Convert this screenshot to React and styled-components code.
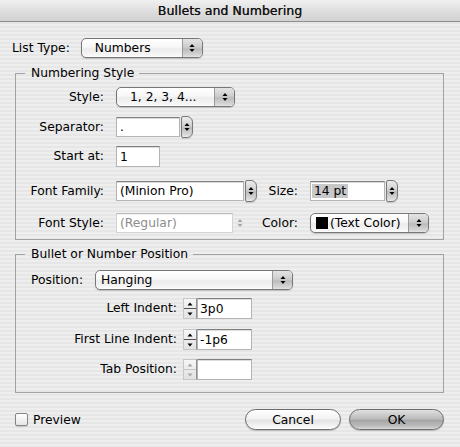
import React from "react";
import styled, { createGlobalStyle } from "styled-components";

const Global = createGlobalStyle`
  html, body { margin: 0; padding: 0; }
  body {
    font-family: "DejaVu Sans", "Liberation Sans", sans-serif;
    font-size: 12.3px;
    color: #000;
    background: #e8e8e8;
  }
`;

const Window = styled.div`
  width: 460px;
  height: 447px;
  box-sizing: border-box;
  background: repeating-linear-gradient(#eeeeee 0 2px, #e6e6e6 2px 4px);
  display: flex;
  flex-direction: column;
`;

const TitleBar = styled.div`
  height: 21px;
  border-bottom: 1px solid #8e8e8e;
  background: linear-gradient(#f0f0f0, #dcdcdc 60%, #d2d2d2);
  display: flex;
  align-items: center;
  justify-content: center;
  font-size: 12.4px;
  color: #111;
  letter-spacing: 0.1px;
  text-shadow: 0.3px 0 0 #333;
`;

const Body = styled.div`
  padding: 16px 16px 0 12px;
  display: flex;
  flex-direction: column;
`;

const Row = styled.div`
  display: flex;
  align-items: center;
  margin-top: ${(p) => p.$mt || 0}px;
  padding-left: ${(p) => p.$pl || 0}px;
`;

const Label = styled.span`
  flex: none;
  width: ${(p) => (p.$w ? `${p.$w}px` : "auto")};
  text-align: ${(p) => p.$align || "right"};
  margin-right: ${(p) => (p.$gap ?? 12)}px;
  white-space: nowrap;
  line-height: 15px;
`;

const Group = styled.fieldset`
  margin: ${(p) => p.$mt}px 0 0 3px;
  padding: ${(p) => p.$pt}px 0 ${(p) => p.$pb}px 0;
  border: 1px solid #a2a2a2;
  width: 429px;
  box-sizing: border-box;
  min-inline-size: 0;
`;

const Legend = styled.legend`
  margin-left: 9px;
  padding: 0 5px 0 6px;
  line-height: 15px;
  font-size: 12.3px;
`;

/* ---------- pop-up button ---------- */
const Popup = styled.div`
  flex: none;
  display: flex;
  width: ${(p) => p.$w}px;
  height: 20px;
  box-sizing: border-box;
  border: 1px solid #777;
  border-radius: 5px;
  overflow: hidden;
  background: linear-gradient(#ffffff, #f7f7f7 45%, #ececec 55%, #f6f6f6 90%, #ffffff);
  box-shadow: 0 1px 1px rgba(0, 0, 0, 0.18);
`;

const PopupText = styled.div`
  flex: 1;
  display: flex;
  align-items: center;
  padding-left: ${(p) => p.$pl ?? 13}px;
  white-space: nowrap;
  overflow: hidden;
`;

const PopupArrow = styled.div`
  flex: none;
  width: 19px;
  border-left: 1px solid #9a9a9a;
  background: linear-gradient(#e4e4e4, #cdcdcd 45%, #bcbcbc 55%, #d6d6d6 90%, #e6e6e6);
  display: flex;
  align-items: center;
  justify-content: center;
`;

const Swatch = styled.span`
  display: inline-block;
  width: 12px;
  height: 12px;
  background: #000;
  margin-right: 2px;
`;

/* ---------- combo box ---------- */
const Combo = styled.div`
  flex: none;
  display: flex;
  align-items: stretch;
  width: ${(p) => p.$w}px;
  height: 20px;
`;

const Field = styled.div`
  flex: ${(p) => (p.$w ? "none" : "1")};
  width: ${(p) => (p.$w ? `${p.$w}px` : "auto")};
  height: ${(p) => p.$h || 20}px;
  box-sizing: border-box;
  background: #fff;
  border: 1px solid ${(p) => (p.$disabled ? "#d4d4d4" : "#b4b4b4")};
  border-top-color: ${(p) => (p.$disabled ? "#bdbdbd" : "#808080")};
  box-shadow: inset 0 1px 0 ${(p) => (p.$disabled ? "#eee" : "#dcdcdc")};
  color: ${(p) => (p.$disabled ? "#8c8c8c" : "#000")};
  display: flex;
  align-items: center;
  padding-left: ${(p) => p.$pl ?? 3}px;
  white-space: nowrap;
  overflow: hidden;
`;

const Selected = styled.span`
  background: #c8c8c8;
  padding: 0 2px 0 2px;
  margin-left: -2px;
  line-height: 14px;
`;

const ComboButton = styled.div`
  flex: none;
  width: 12px;
  margin: -1px 0 -1px 1px;
  box-sizing: border-box;
  border: 1px solid ${(p) => (p.$disabled ? "transparent" : "#7a7a7a")};
  border-radius: 2px 6px 6px 2px;
  background: ${(p) =>
    p.$disabled
      ? "transparent"
      : "linear-gradient(#ececec, #d0d0d0 45%, #bdbdbd 55%, #dadada 90%, #eeeeee)"};
  box-shadow: ${(p) => (p.$disabled ? "none" : "0 1px 1px rgba(0,0,0,0.15)")};
  display: flex;
  align-items: center;
  justify-content: center;
`;

/* ---------- stepper field ---------- */
const Stepper = styled.div`
  flex: none;
  width: 14px;
  height: 21px;
  box-sizing: border-box;
  border: 1px solid #c6c6c6;
  border-right: 1px solid #8e8e8e;
  background: linear-gradient(#f6f6f6, #e2e2e2);
  display: flex;
  flex-direction: column;
`;

const StepHalf = styled.div`
  flex: 1;
  display: flex;
  align-items: center;
  justify-content: center;
  border-top: ${(p) => (p.$bottom ? `1px solid ${p.$disabled ? "#c4c4c4" : "#555"}` : "none")};
`;

/* ---------- buttons ---------- */
const Footer = styled.div`
  display: flex;
  align-items: center;
  margin-top: 16px;
  padding-left: 3px;
`;

const Check = styled.span`
  width: 13px;
  height: 13px;
  box-sizing: border-box;
  border: 1px solid #858585;
  border-radius: 2px;
  background: linear-gradient(#ffffff, #f0f0f0 60%, #e4e4e4);
  box-shadow: 0 1px 1px rgba(0, 0, 0, 0.15);
  margin-right: 5px;
`;

const Spacer = styled.div`
  flex: 1;
`;

const PushButton = styled.button`
  width: ${(p) => p.$w}px;
  height: 21px;
  margin-left: ${(p) => p.$ml || 0}px;
  padding: 0;
  border: 1px solid #6c6c6c;
  border-radius: 11px;
  font: inherit;
  font-size: 12.3px;
  color: #000;
  background: ${(p) =>
    p.$default
      ? "linear-gradient(#e0e0e0, #bdbdbd 45%, #a6a6a6 55%, #bcbcbc 85%, #dadada)"
      : "linear-gradient(#ffffff, #f3f3f3 45%, #e4e4e4 55%, #f4f4f4 85%, #ffffff)"};
  box-shadow: 0 1px 1px rgba(0, 0, 0, 0.2);
`;

const Arrows = ({ color = "#000" }) => (
  <svg width="6" height="10" viewBox="0 0 6 10">
    <path d="M0.5 4 L3 1 L5.5 4 Z" fill={color} />
    <path d="M0.5 6 L3 9 L5.5 6 Z" fill={color} />
  </svg>
);

const Up = ({ color = "#000" }) => (
  <svg width="6" height="4" viewBox="0 0 6 4">
    <path d="M0.5 3.5 L3 0.5 L5.5 3.5 Z" fill={color} />
  </svg>
);

const Down = ({ color = "#000" }) => (
  <svg width="6" height="4" viewBox="0 0 6 4">
    <path d="M0.5 0.5 L3 3.5 L5.5 0.5 Z" fill={color} />
  </svg>
);

const PopupButton = ({ w, children, pl }) => (
  <Popup $w={w}>
    <PopupText $pl={pl}>{children}</PopupText>
    <PopupArrow>
      <Arrows />
    </PopupArrow>
  </Popup>
);

const ComboBox = ({ w, children, disabled }) => (
  <Combo $w={w}>
    <Field $disabled={disabled}>{children}</Field>
    <ComboButton $disabled={disabled}>
      <Arrows color={disabled ? "#a8a8a8" : "#000"} />
    </ComboButton>
  </Combo>
);

const StepField = ({ value, disabled }) => {
  const c = disabled ? "#a8a8a8" : "#000";
  return (
    <>
      <Stepper>
        <StepHalf>
          <Up color={c} />
        </StepHalf>
        <StepHalf $bottom $disabled={disabled}>
          <Down color={c} />
        </StepHalf>
      </Stepper>
      <Field $w={55} $h={21} $pl={2}>
        {value}
      </Field>
    </>
  );
};

export default function App() {
  return (
    <Window>
      <Global />
      <TitleBar>Bullets and Numbering</TitleBar>
      <Body>
        <Row>
          <Label $align="left" $gap={11}>
            List Type:
          </Label>
          <PopupButton w={122} pl={13}>
            Numbers
          </PopupButton>
        </Row>

        <Group $mt={8} $pt={6} $pb={6}>
          <Legend>Numbering Style</Legend>
          <Row>
            <Label $w={88}>Style:</Label>
            <PopupButton w={119}>1, 2, 3, 4...</PopupButton>
          </Row>
          <Row $mt={10}>
            <Label $w={88}>Separator:</Label>
            <ComboBox w={77}>.</ComboBox>
          </Row>
          <Row $mt={9}>
            <Label $w={88}>Start at:</Label>
            <Field $w={44} $h={21}>
              1
            </Field>
          </Row>
          <Row $mt={14}>
            <Label $w={88}>Font Family:</Label>
            <ComboBox w={141}>(Minion Pro)</ComboBox>
            <Label $w={41}>Size:</Label>
            <ComboBox w={88}>
              <Selected>14 pt</Selected>
            </ComboBox>
          </Row>
          <Row $mt={12}>
            <Label $w={88}>Font Style:</Label>
            <ComboBox w={130} disabled>
              (Regular)
            </ComboBox>
            <Label $w={52}>Color:</Label>
            <PopupButton w={119} pl={5}>
              <Swatch />
              (Text Color)
            </PopupButton>
          </Row>
        </Group>

        <Group $mt={7} $pt={8} $pb={12}>
          <Legend>Bullet or Number Position</Legend>
          <Row $pl={15}>
            <Label $w={64} $align="left" $gap={0}>
              Position:
            </Label>
            <PopupButton w={198} pl={5}>
              Hanging
            </PopupButton>
          </Row>
          <Row $mt={8}>
            <Label $w={161} $gap={6}>
              Left Indent:
            </Label>
            <StepField value="3p0" />
          </Row>
          <Row $mt={10}>
            <Label $w={161} $gap={6}>
              First Line Indent:
            </Label>
            <StepField value="-1p6" />
          </Row>
          <Row $mt={9}>
            <Label $w={161} $gap={6}>
              Tab Position:
            </Label>
            <StepField value="" disabled />
          </Row>
        </Group>

        <Footer>
          <Check />
          <span>Preview</span>
          <Spacer />
          <PushButton $w={96}>Cancel</PushButton>
          <PushButton $w={95} $ml={8} $default>
            OK
          </PushButton>
        </Footer>
      </Body>
    </Window>
  );
}
